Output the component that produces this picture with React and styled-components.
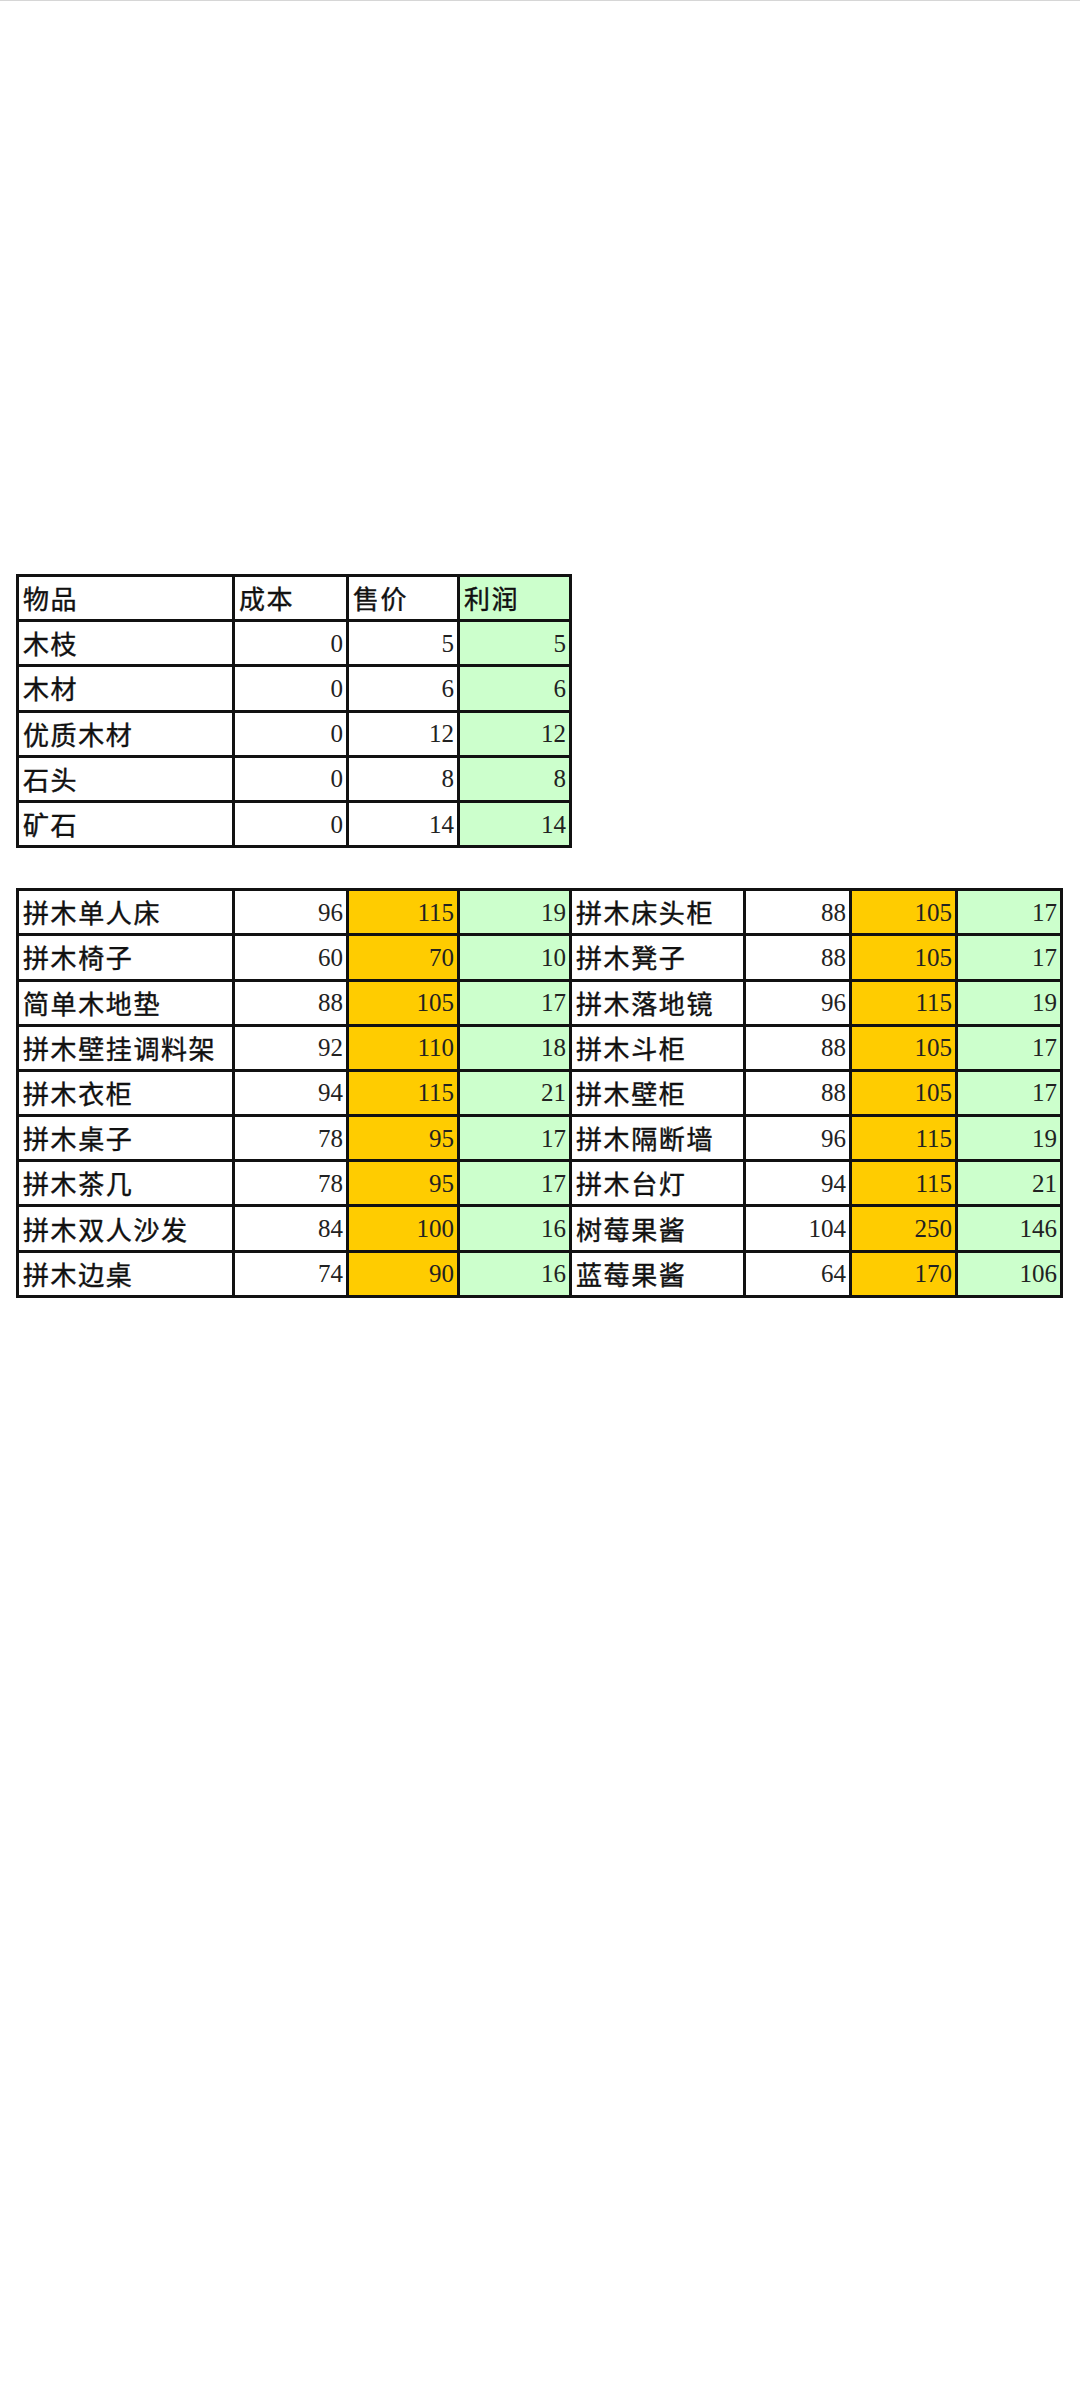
import React from "react";
import styled, { createGlobalStyle } from "styled-components";

const Global = createGlobalStyle`
  html, body { margin: 0; padding: 0; background: #fff; }
  body { width: 1080px; min-height: 2400px; }
`;

const TopLine = styled.div`
  height: 1px;
  background: #d6d6d6;
`;

const Page = styled.div`
  padding: 573px 0 0 16px;
  display: flex;
  flex-direction: column;
  gap: 40px;
  align-items: flex-start;
`;

const Sheet = styled.table`
  border-collapse: collapse;
  table-layout: fixed;
  width: ${(p) => p.$w}px;
`;

const Col = styled.col`
  width: ${(p) => p.$w}px;
`;

const Row = styled.tr`
  height: 45.2px;
`;

const bg = { white: "#ffffff", green: "#ccffcc", orange: "#ffcc00" };

const Cell = styled.td`
  border: 3px solid #111;
  padding: 0 ${(p) => (p.$num ? "3px" : "4px")} 0 ${(p) => (p.$num ? "0" : "4px")};
  background: ${(p) => bg[p.$bg || "white"]};
  text-align: ${(p) => (p.$num ? "right" : "left")};
  vertical-align: middle;
  color: ${(p) => (p.$num ? "#222" : "#111")};
  font-family: ${(p) =>
    p.$num
      ? `"Liberation Serif", "Times New Roman", serif`
      : `"Noto Sans CJK SC", "Noto Sans", sans-serif`};
  font-size: ${(p) => (p.$num ? "25px" : "26px")};
  letter-spacing: ${(p) => (p.$num ? "0" : "1.6px")};
  -webkit-text-stroke: ${(p) => (p.$num ? "0" : "0.4px #111")};
  line-height: 1;
  white-space: nowrap;
  overflow: hidden;
`;

const basic = [
  ["木枝", 0, 5, 5],
  ["木材", 0, 6, 6],
  ["优质木材", 0, 12, 12],
  ["石头", 0, 8, 8],
  ["矿石", 0, 14, 14],
];

const crafted = [
  [["拼木单人床", 96, 115, 19], ["拼木床头柜", 88, 105, 17]],
  [["拼木椅子", 60, 70, 10], ["拼木凳子", 88, 105, 17]],
  [["简单木地垫", 88, 105, 17], ["拼木落地镜", 96, 115, 19]],
  [["拼木壁挂调料架", 92, 110, 18], ["拼木斗柜", 88, 105, 17]],
  [["拼木衣柜", 94, 115, 21], ["拼木壁柜", 88, 105, 17]],
  [["拼木桌子", 78, 95, 17], ["拼木隔断墙", 96, 115, 19]],
  [["拼木茶几", 78, 95, 17], ["拼木台灯", 94, 115, 21]],
  [["拼木双人沙发", 84, 100, 16], ["树莓果酱", 104, 250, 146]],
  [["拼木边桌", 74, 90, 16], ["蓝莓果酱", 64, 170, 106]],
];

const firstCols = [216, 114, 111, 112];
const secondCols = [216, 114, 111, 112, 174, 106, 106, 105];

function Item({ item, priceBg }) {
  const [name, cost, price, profit] = item;
  return (
    <>
      <Cell>{name}</Cell>
      <Cell $num>{cost}</Cell>
      <Cell $num $bg={priceBg}>{price}</Cell>
      <Cell $num $bg="green">{profit}</Cell>
    </>
  );
}

export default function App() {
  return (
    <>
      <Global />
      <TopLine />
      <Page>
        <Sheet $w={553}>
          <colgroup>
            {firstCols.map((w, i) => (
              <Col key={i} $w={w} />
            ))}
          </colgroup>
          <tbody>
            <Row>
              <Cell>物品</Cell>
              <Cell>成本</Cell>
              <Cell>售价</Cell>
              <Cell $bg="green">利润</Cell>
            </Row>
            {basic.map((it) => (
              <Row key={it[0]}>
                <Item item={it} priceBg="white" />
              </Row>
            ))}
          </tbody>
        </Sheet>
        <Sheet $w={1044}>
          <colgroup>
            {secondCols.map((w, i) => (
              <Col key={i} $w={w} />
            ))}
          </colgroup>
          <tbody>
            {crafted.map(([a, b]) => (
              <Row key={a[0]}>
                <Item item={a} priceBg="orange" />
                <Item item={b} priceBg="orange" />
              </Row>
            ))}
          </tbody>
        </Sheet>
      </Page>
    </>
  );
}
